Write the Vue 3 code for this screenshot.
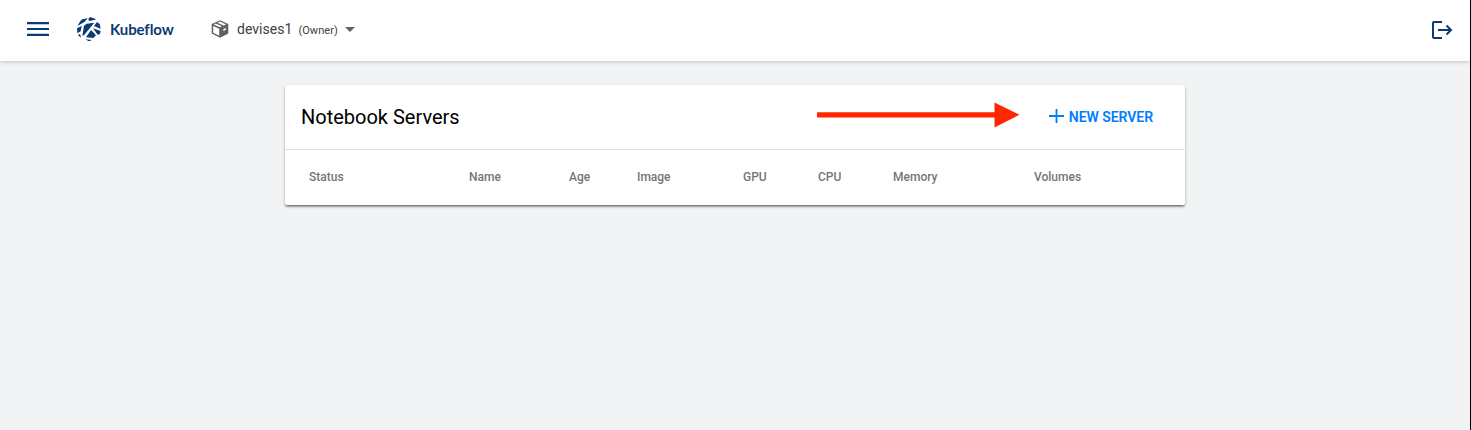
<script setup>
const columns = [
  { label: 'Status', width: 160 },
  { label: 'Name', width: 100 },
  { label: 'Age', width: 68 },
  { label: 'Image', width: 106 },
  { label: 'GPU', width: 75 },
  { label: 'CPU', width: 75 },
  { label: 'Memory', width: 141 },
  { label: 'Volumes', width: 127 },
]
</script>

<template>
  <div class="app">
    <header class="bar">
      <svg class="menu" width="22" height="14" viewBox="0 0 22 14">
        <path d="M0 0h22v2.2H0zM0 5.9h22v2.2H0zM0 11.8h22V14H0z" fill="#0a3b74" />
      </svg>
      <svg class="logo" width="24" height="24" viewBox="0 0 72 72">
        <g fill="#0a3b74">
          <path d="M8 15L15 7 32 4 23 14 2 27z" />
          <path d="M34 6L39 0 54 5 56 8 36 12z" />
          <path d="M0 34L14 27 11 43 1 49z" />
          <path d="M21 26L29 20 52 17 22 53 16 57z" />
          <path d="M60 15L68 21 71 35 51 27z" />
          <path d="M42 39L57 55 49 63 27 61z" />
          <path d="M48 34L71 42 69 51 62 53z" />
          <path d="M3 55L9 50 12 62z" />
          <path d="M25 67L45 69 36 73z" />
        </g>
      </svg>
      <span class="brand">Kubeflow</span>
      <svg class="package" width="18" height="18" viewBox="0 0 18 18">
        <path d="M9 .2L17.3 4v9.5L9 17.8.7 13.5V4z" fill="#5f6164" />
        <path d="M2.2 6l6 2.8v6.9l-6-3z" fill="#fff" />
        <path d="M2.7 4.5l2-1 6.1 2.8-2 1zM6.5 2.7L8.9 1.6l6.2 2.9-2.5 1.1z" fill="#fff" />
        <path d="M12.3 9.3l2.6-1.2v1.7L12.3 11z" fill="#fff" />
      </svg>
      <span class="namespace">devises1</span>
      <span class="role">(Owner)</span>
      <svg class="caret" width="10" height="5" viewBox="0 0 10 5"><path d="M0 0h10L5 5z" fill="#5f6164" /></svg>
      <svg class="logout" width="21" height="18" viewBox="0 0 21 18" fill="none" stroke="#0a3b74" stroke-width="2">
        <path d="M10 1H2Q1 1 1 2v14q0 1 1 1h8M6 9h13M14.5 4.5L19 9l-4.5 4.5" />
      </svg>
    </header>

    <main class="card">
      <div class="card-head">
        <h1>Notebook Servers</h1>
        <svg class="arrow" width="203" height="26" viewBox="0 0 203 26">
          <path d="M0 10.2h177.5V.5L202.5 12.8 177.5 25.5v-10H0z" fill="#ff2600" />
        </svg>
        <button class="new">
          <svg class="plus" width="15" height="14" viewBox="0 0 15 14"><path d="M6.6 0h1.8v6.1H15v1.8H8.4V14H6.6V7.9H0V6.1h6.6z" fill="#007dfc" /></svg>
          <span>NEW SERVER</span>
        </button>
      </div>
      <div class="columns">
        <span v-for="c in columns" :key="c.label" :style="{ width: c.width + 'px' }">{{ c.label }}</span>
      </div>
    </main>
  </div>
</template>

<style>
html, body { margin: 0; background: #f1f3f5; overflow: hidden; }
</style>

<style scoped>
.app {
  height: 430px;
  box-sizing: border-box;
  border-right: 1px solid #000;
  background: #f1f3f5;
  font-family: Roboto, "Liberation Sans", sans-serif;
}
.bar {
  height: 61px;
  box-sizing: border-box;
  padding: 0 17px 3px 27px;
  display: flex;
  align-items: center;
  background: #fff;
  box-shadow: 0 1px 4px rgba(0, 0, 0, .2);
  clip-path: inset(0 0 -8px 0);
}
.logo { margin-left: 28px; }
.brand {
  margin-left: 9px;
  width: 101px;
  font: 700 15px/20px Lato, sans-serif;
  letter-spacing: -.1px;
  color: #0a3b74;
}
.namespace { margin-left: 8px; font-size: 14px; letter-spacing: .03px; color: #3c4043; }
.role { margin: 2px 0 0 6px; font-size: 11px; letter-spacing: .05px; color: #3c4043; }
.caret { margin: 1px 0 0 7px; }
.logout { margin: 2px 0 0 auto; }
.card {
  width: 900px;
  height: 120px;
  margin: 24px auto 0;
  background: #fff;
  border-radius: 4px 4px 2px 2px;
  box-shadow: 0 3px 1px -2px rgba(0, 0, 0, .25), 0 2px 2px rgba(0, 0, 0, .3), 0 1px 4px rgba(0, 0, 0, .12);
}
.card-head {
  height: 65px;
  box-sizing: border-box;
  border-bottom: 1px solid #dfdfdf;
  display: flex;
  align-items: center;
  padding: 0 32px 0 16px;
}
h1 { margin: 0; font-size: 20px; font-weight: 400; line-height: 24px; color: #000; }
.arrow { margin: 0 0 4px auto; }
.new {
  margin-left: 29px;
  padding: 0;
  border: 0;
  background: none;
  display: flex;
  align-items: center;
  gap: 5px;
  font: 600 14px/20px Roboto, sans-serif;
  letter-spacing: -.05px;
  color: #007dfc;
}
.plus { margin-bottom: 2px; }
.columns {
  display: flex;
  align-items: center;
  height: 54px;
  padding-left: 24px;
  font-size: 12px;
  font-weight: 500;
  color: #757575;
}
</style>
